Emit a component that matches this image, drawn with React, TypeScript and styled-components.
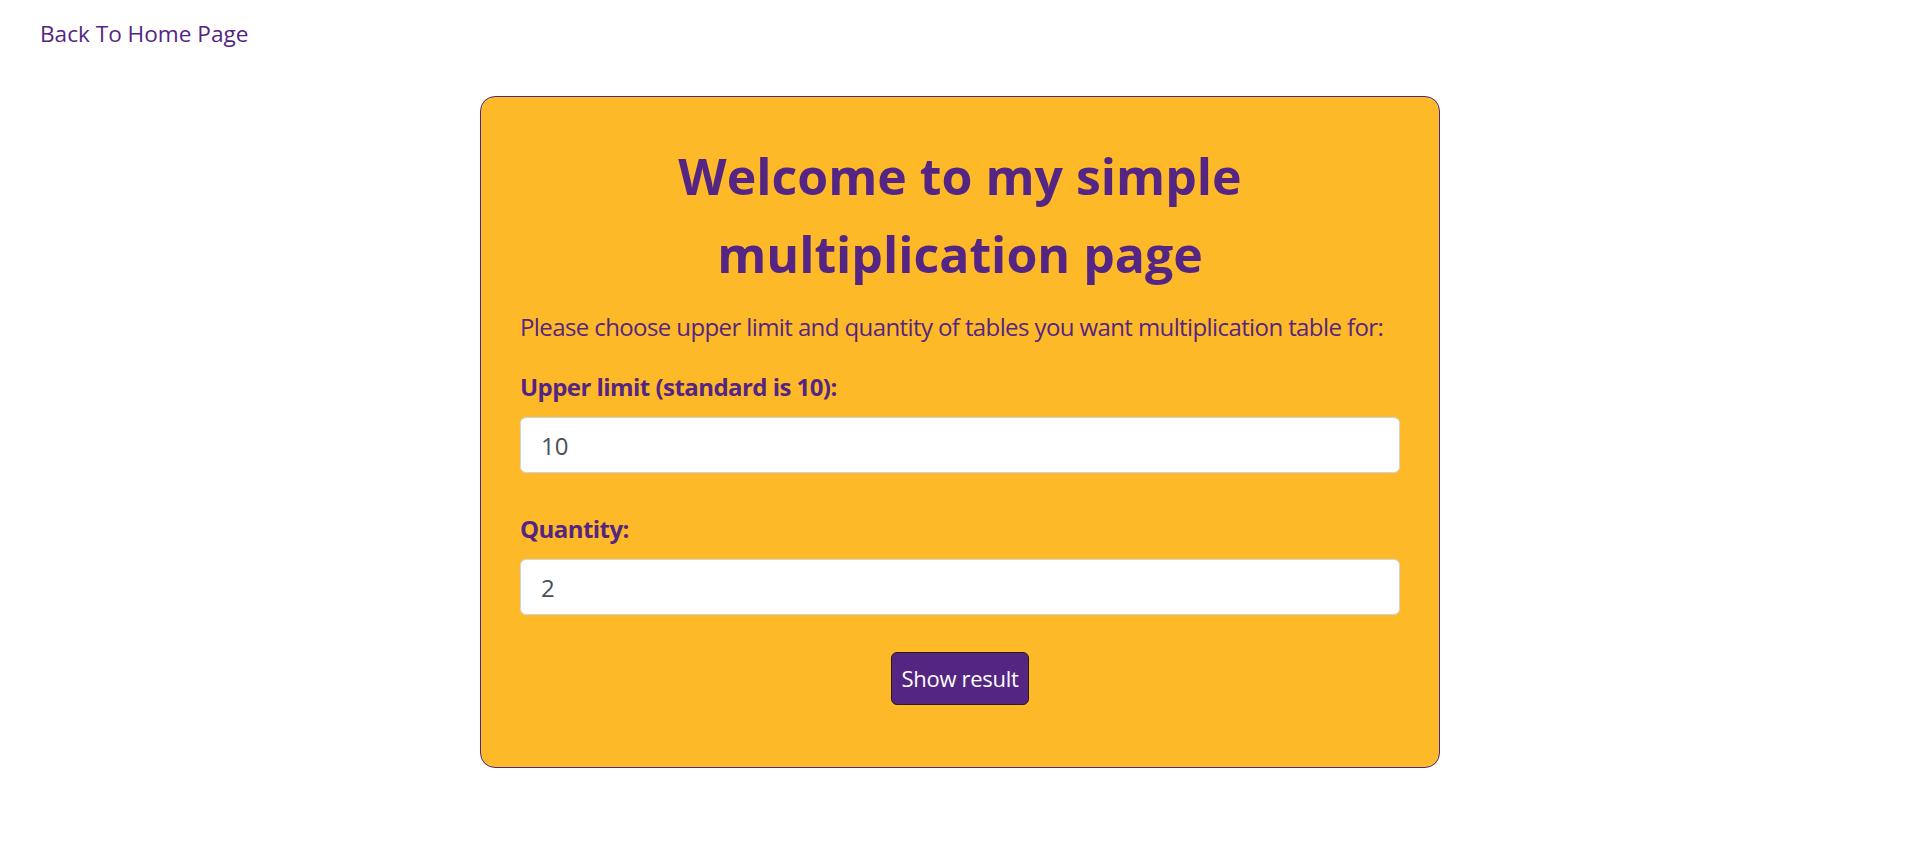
import React from "react";
import styled, { createGlobalStyle } from "styled-components";

const PURPLE = "#552583";
const GOLD = "#FDB927";
const FONT = `"Open Sans", "Noto Sans", "Liberation Sans", sans-serif`;

const GlobalStyle = createGlobalStyle`
  *, *::before, *::after { box-sizing: border-box; }
  html, body { margin: 0; padding: 0; background: #ffffff; }
  body { font-family: ${FONT}; color: ${PURPLE}; }
`;

const Page = styled.div`
  display: flex;
  flex-direction: column;
  min-height: 841px;
`;

const TopBar = styled.nav`
  display: flex;
  padding: 17px 40px 0;
  height: 50px;
`;

const BackLink = styled.a`
  font-size: 22.6px;
  line-height: 33px;
  color: ${PURPLE};
  text-decoration: none;
`;

const Card = styled.main`
  width: 960px;
  margin: 46px auto 0;
  background: ${GOLD};
  border: 1px solid ${PURPLE};
  border-radius: 15px;
  padding: 40px 39px 62px;
  display: flex;
  flex-direction: column;
`;

const Title = styled.h1`
  margin: 0;
  font-size: 50px;
  line-height: 78px;
  font-weight: 700;
  text-align: center;
  color: ${PURPLE};
`;

const Intro = styled.p`
  margin: 16px 0 0;
  font-size: 24px;
  line-height: 36px;
  letter-spacing: -0.6px;
  white-space: nowrap;
  color: ${PURPLE};
`;

const Form = styled.form`
  margin-top: 24px;
  display: flex;
  flex-direction: column;
  gap: 38px;
`;

const Field = styled.div`
  display: flex;
  flex-direction: column;
  gap: 12px;
`;

const Label = styled.label`
  font-size: 24px;
  line-height: 36px;
  font-weight: 700;
  letter-spacing: -0.55px;
  color: ${PURPLE};
`;

const Input = styled.input`
  height: 56px;
  width: 100%;
  padding: 0 20px;
  font-family: ${FONT};
  font-size: 24px;
  color: #495057;
  background: #ffffff;
  border: 1px solid #ced4da;
  border-radius: 6px;
  outline: none;
`;

const Actions = styled.div`
  display: flex;
  justify-content: center;
  margin-top: -1px;
`;

const Button = styled.button`
  font-family: ${FONT};
  font-size: 22px;
  line-height: 35px;
  letter-spacing: -0.3px;
  padding: 8px 10px;
  color: #ffffff;
  background: ${PURPLE};
  border: 1px solid #2e1a10;
  border-radius: 6px;
  cursor: pointer;
`;

export default function App() {
  return (
    <>
      <GlobalStyle />
      <Page>
        <TopBar>
          <BackLink href="#">Back To Home Page</BackLink>
        </TopBar>
        <Card>
          <Title>
            Welcome to my simple
            <br />
            multiplication page
          </Title>
          <Intro>
            Please choose upper limit and quantity of tables you want multiplication table for:
          </Intro>
          <Form onSubmit={(e) => e.preventDefault()}>
            <Field>
              <Label htmlFor="upper">Upper limit (standard is 10):</Label>
              <Input id="upper" type="text" inputMode="numeric" defaultValue="10" />
            </Field>
            <Field>
              <Label htmlFor="qty">Quantity:</Label>
              <Input id="qty" type="text" inputMode="numeric" defaultValue="2" />
            </Field>
            <Actions>
              <Button type="submit">Show result</Button>
            </Actions>
          </Form>
        </Card>
      </Page>
    </>
  );
}
